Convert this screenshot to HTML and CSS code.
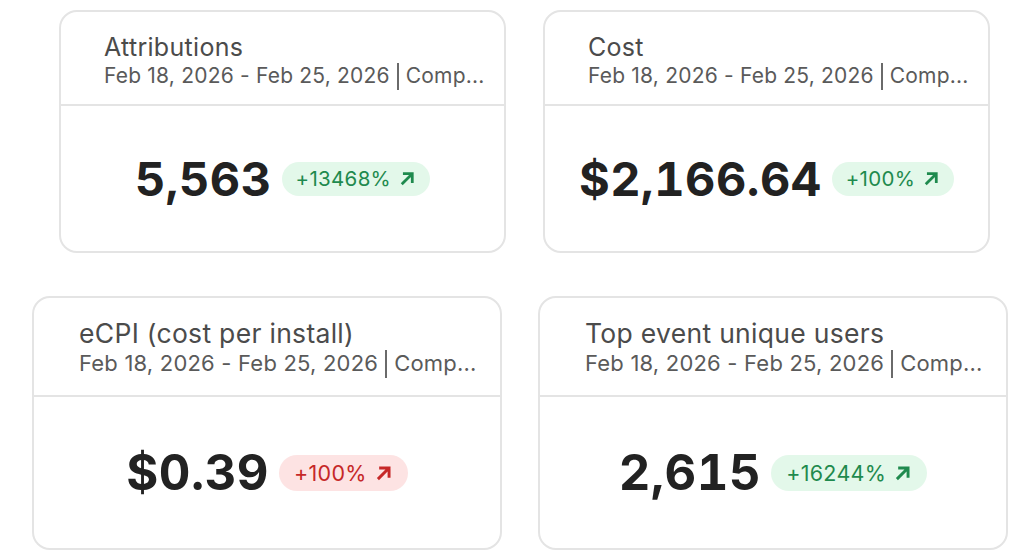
FILE: index.html
```html
<!DOCTYPE html>
<html lang="en">
<head>
    <meta charset="UTF-8">
    <meta name="viewport" content="width=device-width, initial-scale=1.0">
    <title>Dashboard KPIs</title>
    <link rel="stylesheet" href="styles.css">
</head>
<body>
    <!-- Top row -->
    <div class="row row-top">
        <div class="card card-small">
            <div class="card-header">
                <div class="card-title">Attributions</div>
                <div class="card-range">Feb 18, 2026 - Feb 25, 2026 <span class="sep"></span> Comp...</div>
            </div>
            <div class="card-body">
                <span class="value">5,563</span>
                <span class="badge badge-up">+13468%
                    <svg viewBox="0 0 16 16"><path d="M3.5 12.5 L12 4 M5 3.5 H12.5 V11" fill="none" stroke="currentColor" stroke-width="2.6" stroke-linecap="square"/></svg>
                </span>
            </div>
        </div>

        <div class="card card-small">
            <div class="card-header">
                <div class="card-title">Cost</div>
                <div class="card-range">Feb 18, 2026 - Feb 25, 2026 <span class="sep"></span> Comp...</div>
            </div>
            <div class="card-body">
                <span class="value">$2,166.64</span>
                <span class="badge badge-up">+100%
                    <svg viewBox="0 0 16 16"><path d="M3.5 12.5 L12 4 M5 3.5 H12.5 V11" fill="none" stroke="currentColor" stroke-width="2.6" stroke-linecap="square"/></svg>
                </span>
            </div>
        </div>
    </div>

    <!-- Bottom row -->
    <div class="row row-bottom">
        <div class="card card-large">
            <div class="card-header">
                <div class="card-title">eCPI (cost per install)</div>
                <div class="card-range">Feb 18, 2026 - Feb 25, 2026 <span class="sep"></span> Comp...</div>
            </div>
            <div class="card-body">
                <span class="value">$0.39</span>
                <span class="badge badge-bad">+100%
                    <svg viewBox="0 0 16 16"><path d="M3.5 12.5 L12 4 M5 3.5 H12.5 V11" fill="none" stroke="currentColor" stroke-width="2.6" stroke-linecap="square"/></svg>
                </span>
            </div>
        </div>

        <div class="card card-large">
            <div class="card-header">
                <div class="card-title">Top event unique users</div>
                <div class="card-range">Feb 18, 2026 - Feb 25, 2026 <span class="sep"></span> Comp...</div>
            </div>
            <div class="card-body">
                <span class="value">2,615</span>
                <span class="badge badge-up">+16244%
                    <svg viewBox="0 0 16 16"><path d="M3.5 12.5 L12 4 M5 3.5 H12.5 V11" fill="none" stroke="currentColor" stroke-width="2.6" stroke-linecap="square"/></svg>
                </span>
            </div>
        </div>
    </div>
</body>
</html>
```

FILE: styles.css
```css
/* Page */
body {
    margin: 0;
    padding: 10px 0 0 0;
    background: #ffffff;
    font-family: Inter, Roboto, "Noto Sans", sans-serif;
}

/* Rows of cards */
.row {
    display: flex;
}

.row-top {
    padding-left: 59px;
    gap: 37px;
}

.row-bottom {
    margin-top: 43px;
    padding-left: 32px;
    gap: 36px;
}

/* Card */
.card {
    box-sizing: border-box;
    border: 2px solid #e4e4e4;
    border-radius: 18px;
    background: white;
    display: flex;
    flex-direction: column;
}

.card-small {
    width: 447px;
    height: 243px;
}

.card-large {
    width: 470px;
    height: 254px;
}

.card-header {
    box-sizing: border-box;
    border-bottom: 2px solid #e4e4e4;
    padding: 20px 0 0 43px;
    height: 94px;
}

.card-title {
    font-size: 25px;
    color: #4b4b4b;
    line-height: 30px;
    letter-spacing: 0.3px;
}

.card-range {
    font-size: 21px;
    color: #5a5a5a;
    line-height: 28px;
    white-space: nowrap;
    display: flex;
    align-items: center;
    gap: 7px;
    letter-spacing: 0.2px;
}

.card-range .sep {
    display: inline-block;
    width: 2px;
    height: 27px;
    background: #6a6a6a;
}

.card-body {
    flex: 1;
    display: flex;
    align-items: center;
    justify-content: center;
    gap: 10px;
}

.value {
    font-size: 47px;
    font-weight: 700;
    color: #222222;
    letter-spacing: 0.5px;
    font-variant-numeric: tabular-nums;
}

/* Change badge */
.badge {
    display: inline-flex;
    align-items: center;
    gap: 8px;
    height: 34px;
    padding: 0 14px;
    border-radius: 17px;
    font-size: 20.5px;
    letter-spacing: 0.3px;
}

.badge svg {
    width: 17px;
    height: 17px;
}

.badge-up {
    background: #e3f8ea;
    color: #1f8a4e;
}

.badge-bad {
    background: #fde3e3;
    color: #c62828;
}

/* Bottom cards are drawn slightly larger */
.card-large .card-header {
    height: 99px;
    padding: 19px 0 0 45px;
}

.card-large .card-title {
    font-size: 26.5px;
    line-height: 32px;
}

.card-large .card-range {
    font-size: 22px;
    line-height: 29px;
}

.card-large .sep {
    height: 28px;
}

.card-large .value {
    font-size: 49px;
}

.card-large .badge {
    height: 36px;
    border-radius: 18px;
    font-size: 21.5px;
    padding: 0 15px;
}

.card-large .badge svg {
    width: 18px;
    height: 18px;
}
```
